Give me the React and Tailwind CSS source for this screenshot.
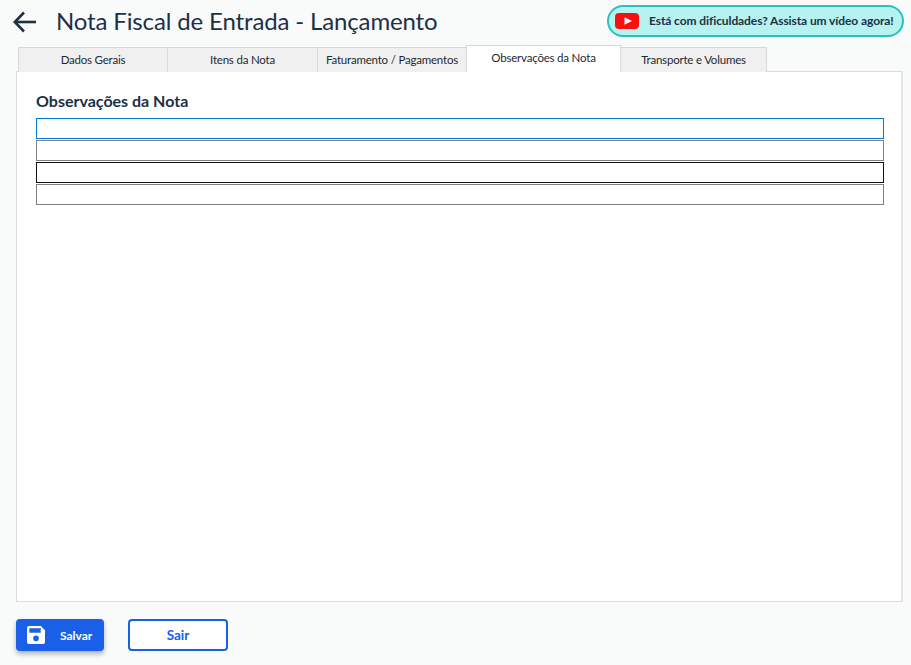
const tabs = [
  { label: "Dados Gerais", width: "w-[150px]" },
  { label: "Itens da Nota", width: "w-[151px]" },
  { label: "Faturamento / Pagamentos", width: "w-[150px]" },
];

function Tab({ label, width }) {
  return (
    <div
      className={`${width} h-[25px] -ml-px first:ml-0 flex items-center justify-center bg-[#f0f0f0] border border-b-0 border-[#d8d8d8] text-[11.5px] tracking-[-0.2px] text-[#1f2a33] whitespace-nowrap`}
    >
      {label}
    </div>
  );
}

function BackArrow() {
  return (
    <svg width="24" height="22" viewBox="0 0 24 22" fill="none" stroke="#1d3045" strokeWidth="2.6">
      <path d="M23 11H2" />
      <path d="M11 1.5 1.8 11l9.2 9.5" />
    </svg>
  );
}

function YoutubeIcon() {
  return (
    <svg width="24" height="16" viewBox="0 0 24 16">
      <rect width="24" height="16" rx="4" fill="#fa0f0f" />
      <path d="M9.5 4.2 L17 8 L9.5 11.8 Z" fill="#fff" />
    </svg>
  );
}

function SaveIcon() {
  return (
    <svg width="18" height="18" viewBox="0 0 19 19">
      <path
        fillRule="evenodd"
        d="M2 0h12.5L19 4.5V17a2 2 0 0 1-2 2H2a2 2 0 0 1-2-2V2a2 2 0 0 1 2-2ZM2.5 2.5v4.5h12V2.5ZM9.5 10a3 3 0 1 0 0 6 3 3 0 0 0 0-6Z"
        fill="#fff"
      />
    </svg>
  );
}

export default function App() {
  return (
    <div className="w-[911px] h-[665px] bg-[#f9fbfb] flex flex-col font-['Lato',sans-serif] overflow-hidden">
      <header className="h-[45px] flex items-start pl-[13px] pr-[7px] pt-[5px]">
        <div className="pt-[6px]">
          <BackArrow />
        </div>
        <h1 className="ml-[19px] -mt-px text-[24px] leading-[34px] tracking-[-0.14px] text-[#1d3045]">
          Nota Fiscal de Entrada - Lançamento
        </h1>
        <div className="ml-auto w-[297px] h-[32px] flex items-center gap-[10px] pl-[6px] rounded-full border-2 border-[#2bbfbf] bg-[#b5f2f0]">
          <YoutubeIcon />
          <span className="text-[12px] font-bold tracking-[-0.09px] text-[#1d3045] whitespace-nowrap">
            Está com dificuldades? Assista um vídeo agora!
          </span>
        </div>
      </header>

      <div className="flex items-end h-[27px] pl-[18px] -mb-px relative z-10">
        {tabs.map((tab) => (
          <Tab key={tab.label} {...tab} />
        ))}
        <div className="w-[155px] h-[27px] -ml-px flex items-center justify-center pb-[2px] bg-white border border-b-0 border-[#d8d8d8] text-[11.5px] tracking-[-0.2px] text-[#1f2a33]">
          Observações da Nota
        </div>
        <Tab label="Transporte e Volumes" width="w-[147px]" />
      </div>

      <main className="ml-[16px] w-[887px] h-[531px] bg-white border border-r-2 border-[#dcdcdc] border-r-[#e6e6e6] pl-[19px] pr-[17px] pt-[19px]">
        <h2 className="text-[16px] font-bold leading-[20px] text-[#1d3045]">
          Observações da Nota
        </h2>
        <div className="mt-[7px] flex flex-col gap-px">
          <input className="h-[21px] border border-[#0078d4] outline-none" />
          <input className="h-[21px] border border-[#808080] outline-none" />
          <input className="h-[21px] border border-[#111111] outline-none" />
          <input className="h-[21px] border border-[#808080] outline-none" />
        </div>
      </main>

      <footer className="flex gap-[24px] pl-[16px] pt-[17px]">
        <button className="w-[88px] h-[32px] flex items-center pl-[11px] rounded bg-[#1a5fe8] text-white text-[12px] font-bold shadow-[0_3px_5px_rgba(0,0,0,0.3)]">
          <SaveIcon />
          <span className="ml-[15px] pt-[1px]">Salvar</span>
        </button>
        <button className="w-[100px] h-[32px] flex items-center justify-center pt-[1px] rounded border-2 border-[#1a5fe8] bg-white text-[#1a5fe8] text-[13.5px] font-bold">
          Sair
        </button>
      </footer>
    </div>
  );
}
